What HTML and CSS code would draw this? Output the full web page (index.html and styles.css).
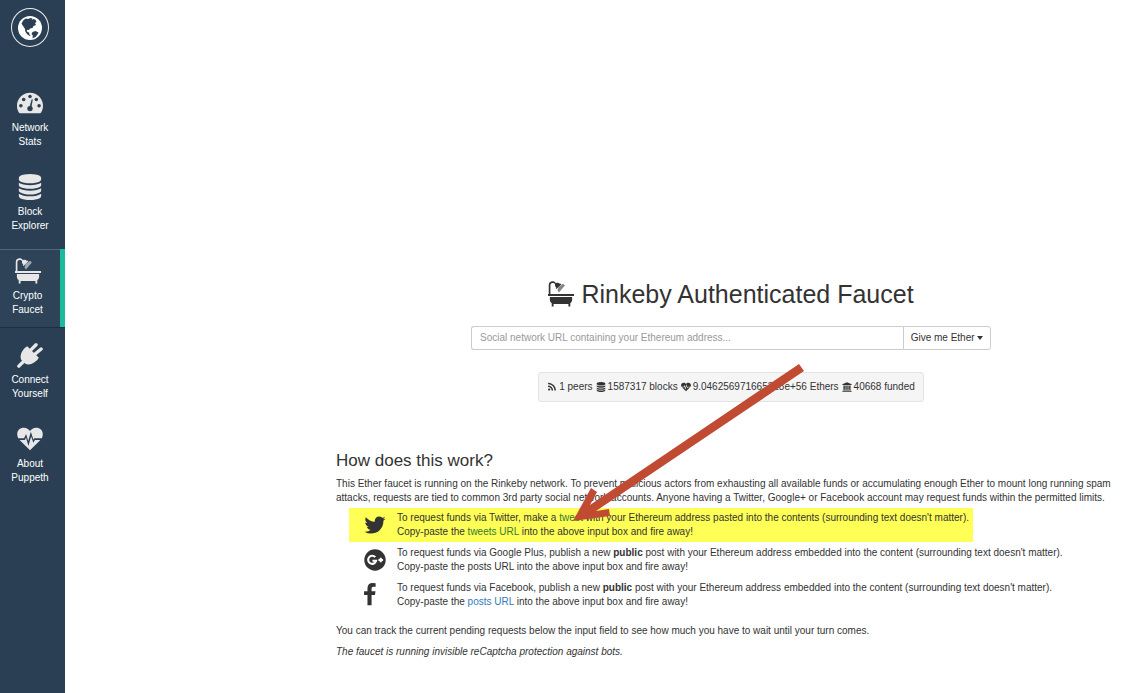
FILE: index.html
```html
<!DOCTYPE html>
<html lang="en">
<head>
<meta charset="utf-8">
<title>Rinkeby Authenticated Faucet</title>
<link rel="stylesheet" href="styles.css">
</head>
<body>
<svg class="defs" aria-hidden="true">
  <symbol id="database" viewBox="0 0 1792 1792"><path d="M896 768q237 0 443-43t325-127v170q0 69-103 128t-280 93.500-385 34.500-385-34.500-280-93.500-103-128v-170q119 84 325 127t443 43zm0 768q237 0 443-43t325-127v170q0 69-103 128t-280 93.500-385 34.500-385-34.500-280-93.500-103-128v-170q119 84 325 127t443 43zm0-384q237 0 443-43t325-127v170q0 69-103 128t-280 93.500-385 34.500-385-34.500-280-93.500-103-128v-170q119 84 325 127t443 43zm0-1152q208 0 385 34.500t280 93.500 103 128v128q0 69-103 128t-280 93.500-385 34.500-385-34.500-280-93.500-103-128v-128q0-69 103-128t280-93.500 385-34.500z"/></symbol>
  <symbol id="heart" viewBox="0 0 28 28"><path d="M14 26 2.800 15H8.500l1.200-2.500 2.600 9 2.900-10.200 2.400 6.700 1.700-3H25.200zM1.300 13.300C-1.500 7 1.500 2 7.500 2c2.800 0 5 1.600 6.500 3.500C15.500 3.600 17.700 2 20.500 2c6 0 9 5 6.200 11.300h-8.200l-.8 1.400-2.800-8.500-2.800 10-2.300-7.700-2.200 4.800z"/></symbol>
  <symbol id="bath" viewBox="0 0 28 28"><path d="M.8 14V4.500C.8 1.500 2.800.3 4.800.3c1.700 0 3 .7 3.600 2 1.700-.7 3.500-.3 4.600.8l.6-.5.8.8-5.200 5.200-.8-.8.5-.6C7.700 6 7.300 4.600 7.600 3.500 7.200 2.500 6.300 2.100 4.900 2.100c-1.700 0-2.300 1.200-2.300 2.400V14H28v2.200H0V14zM2 17.200h24V20c0 1.800-.8 3.200-2 4v3.500h-2v-2.700H6v2.700H4V24c-1.200-.8-2-2.200-2-4z"/><path d="m11.400 6.500 4.800-3.500 2 1.800-6.400 7.500-1.600-2z" opacity=".6"/></symbol>
</svg>

<nav class="sidebar">
  <a class="brand" href="#" aria-label="Home">
    <svg class="globe" viewBox="0 0 24 24"><circle cx="12" cy="12" r="12" fill="#fff"/><path fill="#2a3f54" d="M5.500 4 8 2.500l2 .5 2.500-1 2 .5-1 1.500 2-1 2 .7 1 2.300-1.500 1 1 2-2.500 1-1 2-2.500.5-1 1.500-2-.3-.2 1.800 2.200 1 .4 2 1.200.8-.7.700-2.500-1.500-2-2.700-.6-3.300L5 10 3.500 7.500zM14.500 16l3-1 3 1.500-1 2-2 2.500-3 1.200.3-2.700-1.300-1.500z"/></svg>
  </a>
  <ul class="menu">
    <li><a class="item" href="#">
      <svg class="icon" viewBox="0 0 28 28"><path fill="currentColor" d="M14 3C6.200 3 0 9.200 0 17c0 2.800.8 5.300 2 7.300.3.500.7.700 1.200.7h21.600c.5 0 .9-.2 1.200-.7 1.200-2 2-4.500 2-7.300C28 9.200 21.800 3 14 3z"/><g fill="#2a3f54"><circle cx="4.200" cy="17" r="1.900"/><circle cx="7.200" cy="10.200" r="1.900"/><circle cx="14" cy="7" r="1.900"/><circle cx="20.800" cy="10.200" r="1.900"/><circle cx="23.800" cy="17" r="1.900"/><circle cx="14" cy="20" r="2.900"/><path d="m15.800 10 1.200.3-1.600 9.200-2-.6z"/></g></svg>
      Network<br>Stats</a></li>
    <li><a class="item" href="#"><svg class="icon"><use href="#database"/></svg>Block<br>Explorer</a></li>
    <li><a class="item active" href="#" aria-current="page"><svg class="icon"><use href="#bath"/></svg>Crypto<br>Faucet</a></li>
    <li><a class="item" href="#">
      <svg class="icon" viewBox="0 0 28 28"><g stroke="currentColor" stroke-width="3.600" stroke-linecap="round"><path d="M15 8.500 20.500 3M19.500 13 26 7.500M2 26l5-5"/></g><path fill="currentColor" d="M11 4.500 23.500 17c-3.500 5.500-9.500 8.500-14.500 6.500L4.500 19C2.500 14 5.500 8 11 4.500z"/></svg>
      Connect<br>Yourself</a></li>
    <li><a class="item" href="#"><svg class="icon"><use href="#heart"/></svg>About<br>Puppeth</a></li>
  </ul>
</nav>

<main class="content">
  <h1 class="title"><svg class="title-icon"><use href="#bath"/></svg>Rinkeby Authenticated Faucet</h1>
  <form class="request">
    <input class="url" type="text" aria-label="Social network URL" placeholder="Social network URL containing your Ethereum address...">
    <button class="give" type="button">Give me Ether <span class="caret"></span></button>
  </form>
  <div class="stats">
    <span class="stat"><svg class="small" viewBox="0 0 1792 1792"><path d="M576 1344q0 80-56 136t-136 56-136-56-56-136 56-136 136-56 136 56 56 136zm512 123q2 28-17 48-18 21-47 21h-135q-25 0-43-16.500t-20-41.500q-22-229-184.500-391.500t-391.500-184.500q-25-2-41.500-20t-16.500-43v-135q0-29 21-47 17-17 43-17h5q160 13 306 80.500t259 181.500q114 113 181.500 259t80.500 306zm512 2q2 27-18 47-18 20-46 20h-143q-26 0-44.500-17.500t-19.500-42.500q-12-215-101-408.500t-231.500-336-336-231.500-408.500-102q-25-1-42.500-19.500t-17.500-43.500v-143q0-28 20-46 18-18 44-18h3q262 13 501.500 120t425.500 294q187 186 294 425.500t120 501.500z"/></svg>1 peers</span>
    <span class="stat"><svg class="small"><use href="#database"/></svg>1587317 blocks</span>
    <span class="stat"><svg class="small"><use href="#heart"/></svg>9.046256971665328e+56 Ethers</span>
    <span class="stat"><svg class="small" viewBox="0 0 28 28"><path d="m14 1 13 5.500v2H1v-2zM4 10h4v11H4zm5.500 0h3.700v11H9.500zm5.300 0h3.700v11h-3.700zM20 10h4v11h-4zM2.500 22h23v2h-23zM1 25h26v2H1z"/></svg>40668 funded</span>
  </div>

  <section class="about">
    <h2 class="subtitle">How does this work?</h2>
    <p class="para">This Ether faucet is running on the Rinkeby network. To prevent malicious actors from exhausting all available funds or accumulating enough Ether to mount long running spam attacks, requests are tied to common 3rd party social network accounts. Anyone having a Twitter, Google+ or Facebook account may request funds within the permitted limits.</p>
    <ul class="ways">
      <li class="way marked">
        <svg class="social" viewBox="0 0 1792 1792"><path d="M1684 408q-67 98-162 167 1 14 1 42 0 130-38 259.500t-115.500 248.500-184.500 210.500-258 146-323 54.500q-271 0-496-145 35 4 78 4 225 0 401-138-105-2-188-64.500t-114-159.500q33 5 61 5 43 0 85-11-112-23-185.500-111.500t-73.500-205.500v-4q68 38 146 41-66-44-105-115t-39-154q0-88 44-163 121 149 294.500 238.500t371.500 99.500q-8-38-8-74 0-134 94.500-228.500t228.500-94.500q140 0 236 102 109-21 205-78-37 115-142 178 93-10 186-50z"/></svg>
        <p class="text">To request funds via Twitter, make a <a href="#">tweet</a> with your Ethereum address pasted into the contents (surrounding text doesn't matter).<br>Copy-paste the <a href="#">tweets URL</a> into the above input box and fire away!</p>
      </li>
      <li class="way">
        <svg class="social" viewBox="0 0 28 28"><circle cx="14" cy="14" r="12.500"/><path fill="none" stroke="#fff" stroke-width="2.400" d="M14.300 10.700a4.700 4.700 0 1 0 1 4.200H11M18 14h5.400M20.700 11.300v5.400"/></svg>
        <p class="text">To request funds via Google Plus, publish a new <strong>public</strong> post with your Ethereum address embedded into the content (surrounding text doesn't matter).<br>Copy-paste the posts URL into the above input box and fire away!</p>
      </li>
      <li class="way">
        <svg class="social" viewBox="400 0 1792 1792"><path d="M1343 12v264h-157q-86 0-116 36t-30 108v189h293l-39 296h-254v759h-306v-759h-255v-296h255v-218q0-186 104-288.500t277-102.500q147 0 228 12z"/></svg>
        <p class="text">To request funds via Facebook, publish a new <strong>public</strong> post with your Ethereum address embedded into the content (surrounding text doesn't matter).<br>Copy-paste the <a href="#">posts URL</a> into the above input box and fire away!</p>
      </li>
    </ul>
    <p class="para">You can track the current pending requests below the input field to see how much you have to wait until your turn comes.</p>
    <p class="para"><em>The faucet is running invisible reCaptcha protection against bots.</em></p>
  </section>

  <svg class="arrow" viewBox="0 0 231 158" aria-hidden="true"><path d="M226 0 231 7 23 147 36 145 37 152 0 157 18 124 24 128 17 141z"/></svg>
</main>
</body>
</html>
```
FILE: styles.css
```css
* { box-sizing: border-box; }

body {
  display: flex;
  min-height: 100vh;
  margin: 0;
  background: #fff;
  color: #333;
  font: 10px/14px "Liberation Sans", Arial, sans-serif;
}

svg { fill: currentColor; flex: none; }
.defs { position: absolute; width: 0; height: 0; }
h1, h2, p, ul { margin: 0; padding: 0; font-weight: 400; }
ul { list-style: none; }
a { color: #337ab7; text-decoration: none; }

.sidebar {
  flex: none;
  width: 65px;
  padding-top: 8px;
  background: #2a3f54;
}

.brand {
  display: flex;
  align-items: center;
  justify-content: center;
  width: 38px;
  height: 39px;
  margin-left: 11px;
  border: 1px solid #eaeaea;
  border-radius: 50%;
}
.globe { width: 24px; height: 24px; }

.menu {
  display: grid;
  gap: 6px;
  padding-top: 34px;
}
.item {
  display: block;
  height: 78px;
  padding: 9px 5px 0 0;
  color: #fff;
  text-align: center;
}
.item.active {
  border-right: 5px solid #1abb9c;
  background: #2e4358;
  box-shadow: inset 0 1px #566778, 0 1px #1d2e40;
}
.icon {
  display: block;
  width: 26px;
  height: 26px;
  margin: 0 auto 5px;
  color: #e7e7e7;
}

.content {
  position: relative;
  flex: 1;
  max-width: 790px;
  margin: 276px 20px 0 auto;
}

.title {
  display: flex;
  align-items: center;
  justify-content: center;
  gap: 7px;
  font-size: 25px;
  line-height: 36px;
}
.title-icon { width: 26px; height: 26px; }

.request {
  display: flex;
  max-width: 520px;
  height: 24px;
  margin: 14px auto 0;
}
.url, .give {
  border: 1px solid #ccc;
  background: #fff;
  color: #333;
  font: inherit;
}
.url {
  flex: 1;
  min-width: 0;
  padding: 0 8px;
  border-right: 0;
  border-radius: 3px 0 0 3px;
}
.url::placeholder { color: #999; opacity: 1; }
.give {
  width: 88px;
  padding: 0;
  border-radius: 0 3px 3px 0;
  white-space: nowrap;
}
.caret {
  display: inline-block;
  border: 3px solid transparent;
  border-top: 4px solid #333;
  border-bottom: 0;
  vertical-align: middle;
}

.stats {
  display: flex;
  align-items: center;
  justify-content: center;
  gap: 3px;
  width: fit-content;
  height: 30px;
  margin: 22px auto 0;
  padding: 0 8px;
  border: 1px solid #e3e3e3;
  border-radius: 3px;
  background: #f5f5f5;
  white-space: nowrap;
}
.stat { display: flex; align-items: center; gap: 2px; }
.small { width: 10px; height: 10px; }

.about { padding-top: 48px; }
.subtitle {
  margin-bottom: 5px;
  font-size: 17px;
  line-height: 22px;
}
.para { margin-bottom: 7px; }
.ways {
  display: grid;
  gap: 1px;
  margin: -4px 0 12px 13px;
}
.way {
  display: flex;
  align-items: center;
  gap: 10px;
  width: fit-content;
  padding: 3px 4px 3px 14px;
}
.marked { background: #ffff55; }
.marked a { color: #337a33; }
.social { width: 24px; height: 24px; }

.arrow {
  position: absolute;
  top: 88px;
  left: 237px;
  width: 231px;
  height: 158px;
  fill: #c14a32;
  pointer-events: none;
}
```
